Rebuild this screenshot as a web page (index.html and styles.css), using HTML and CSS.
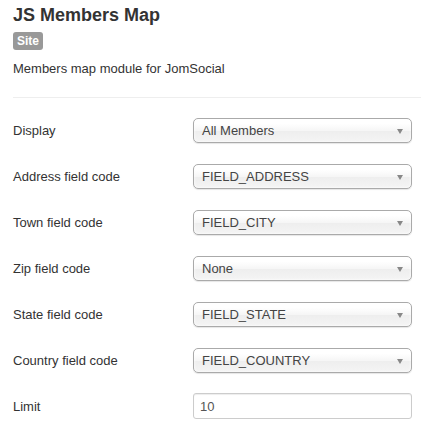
FILE: index.html
```html
<!DOCTYPE html>
<html lang="en">
  <head>
    <meta charset="utf-8" />
    <title>JS Members Map</title>
    <link rel="stylesheet" href="styles.css">
  </head>
  <body>
    <div class="module-info">
      <h2 class="module-title">JS Members Map</h2>
      <span class="badge">Site</span>
      <p class="module-desc">Members map module for JomSocial</p>
      <hr>
    </div>

    <form class="module-form">
      <div class="control-group">
        <label class="control-label">Display</label>
        <div class="chzn-select"><span>All Members</span><b class="arrow"></b></div>
      </div>
      <div class="control-group">
        <label class="control-label">Address field code</label>
        <div class="chzn-select"><span>FIELD_ADDRESS</span><b class="arrow"></b></div>
      </div>
      <div class="control-group">
        <label class="control-label">Town field code</label>
        <div class="chzn-select"><span>FIELD_CITY</span><b class="arrow"></b></div>
      </div>
      <div class="control-group">
        <label class="control-label">Zip field code</label>
        <div class="chzn-select"><span>None</span><b class="arrow"></b></div>
      </div>
      <div class="control-group">
        <label class="control-label">State field code</label>
        <div class="chzn-select"><span>FIELD_STATE</span><b class="arrow"></b></div>
      </div>
      <div class="control-group">
        <label class="control-label">Country field code</label>
        <div class="chzn-select"><span>FIELD_COUNTRY</span><b class="arrow"></b></div>
      </div>
      <div class="control-group">
        <label class="control-label">Limit</label>
        <input class="text-input" type="text" value="10">
      </div>
    </form>
  </body>
</html>
```

FILE: styles.css
```css
body {
  margin: 0;
  padding: 0 1px 0 13px;
  background: #fff;
  color: #333;
  font-family: "Liberation Sans", Arial, sans-serif;
  font-size: 13px;
}

.module-title {
  margin: 0;
  padding-top: 4px;
  font-size: 18px;
  line-height: 22px;
  font-weight: bold;
  color: #333;
}

.badge {
  display: inline-block;
  margin-top: 6px;
  padding: 2px 4px;
  border-radius: 3px;
  background: #999;
  color: #fff;
  font-size: 12px;
  font-weight: bold;
  line-height: 14px;
}

.module-desc {
  margin: 10px 0 0;
  line-height: 18px;
}

hr {
  margin: 19px 0 0;
  border: 0;
  border-top: 1px solid #eee;
}

.module-form {
  padding-top: 19px;
  padding-right: 9px;
}

.control-group {
  display: flex;
  align-items: center;
  height: 26px;
  margin-bottom: 20px;
}

.control-label {
  width: 180px;
  flex-shrink: 0;
}

.chzn-select {
  position: relative;
  flex: 1;
  height: 25px;
  box-sizing: border-box;
  padding-left: 8px;
  border: 1px solid #aaa;
  border-radius: 5px;
  background: linear-gradient(#fff 20%, #f6f6f6 50%, #eee 52%, #f4f4f4 100%);
  box-shadow: inset 0 0 3px #fff, 0 1px 1px rgba(0, 0, 0, 0.1);
  line-height: 23px;
  color: #444;
}

.chzn-select .arrow {
  position: absolute;
  right: 8px;
  top: 10px;
  width: 0;
  height: 0;
  border-left: 3px solid transparent;
  border-right: 3px solid transparent;
  border-top: 5px solid #888;
}

.text-input {
  flex: 1;
  min-width: 0;
  height: 26px;
  box-sizing: border-box;
  margin: 0;
  padding: 4px 6px;
  border: 1px solid #ccc;
  border-radius: 3px;
  box-shadow: inset 0 1px 1px rgba(0, 0, 0, 0.075);
  font-family: inherit;
  font-size: 13px;
  color: #555;
}
```
